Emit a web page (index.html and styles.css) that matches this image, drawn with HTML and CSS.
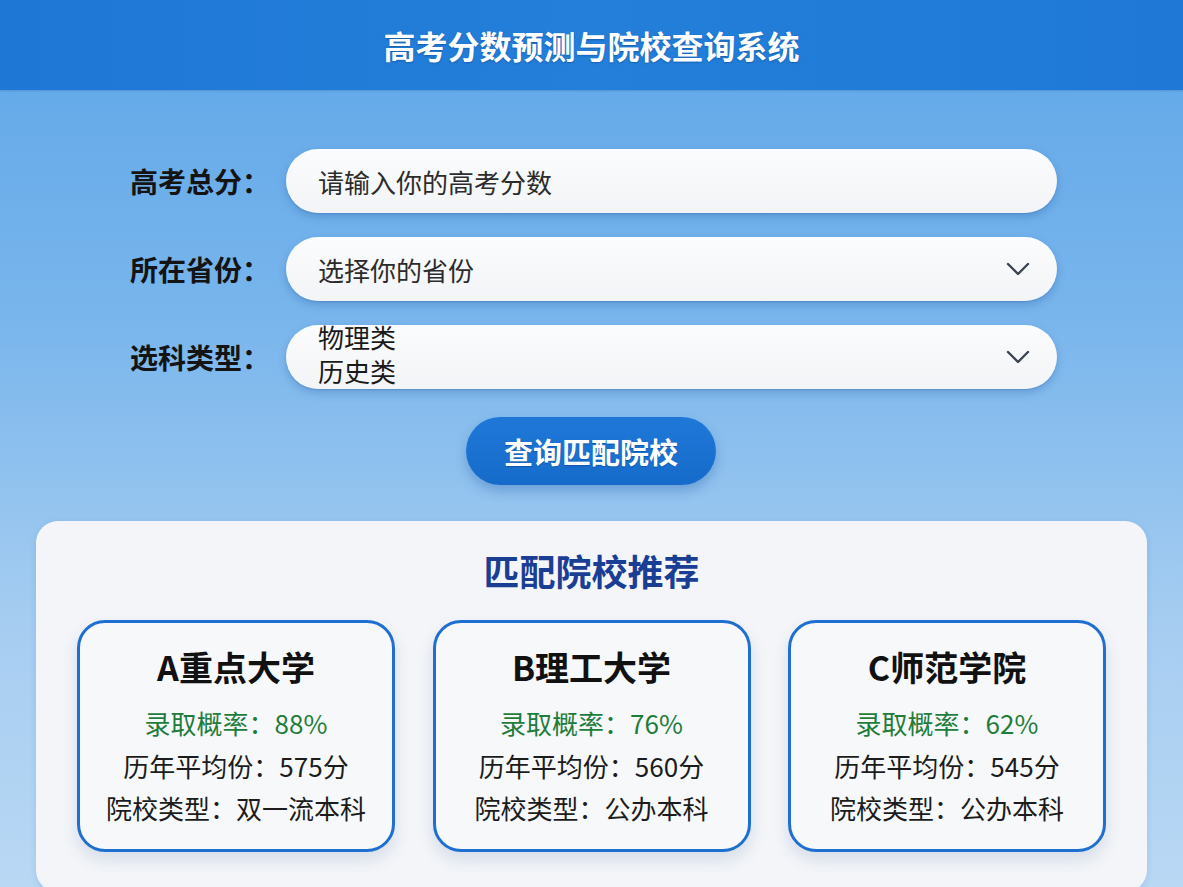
FILE: index.html
```html
<!DOCTYPE html>
<html lang="zh-CN">
<head>
<meta charset="utf-8">
<title>高考分数预测与院校查询系统</title>
<link rel="stylesheet" href="styles.css">
</head>
<body>
<header class="topbar">
  <h1 class="topbar-title">高考分数预测与院校查询系统</h1>
</header>
<main class="page">
  <form class="query-form">
    <div class="form-row">
      <label class="form-label">高考总分：</label>
      <div class="field"><span class="field-text">请输入你的高考分数</span></div>
    </div>
    <div class="form-row">
      <label class="form-label">所在省份：</label>
      <div class="field field-select">
        <span class="field-text">选择你的省份</span>
        <svg class="chevron" viewBox="0 0 24 14" width="24" height="14"><path d="M2 2 L12 12 L22 2" fill="none" stroke="#3a4450" stroke-width="2.4" stroke-linecap="round" stroke-linejoin="round"/></svg>
      </div>
    </div>
    <div class="form-row">
      <label class="form-label">选科类型：</label>
      <div class="field field-select">
        <span class="field-options"><span>物理类</span><span>历史类</span></span>
        <svg class="chevron" viewBox="0 0 24 14" width="24" height="14"><path d="M2 2 L12 12 L22 2" fill="none" stroke="#3a4450" stroke-width="2.4" stroke-linecap="round" stroke-linejoin="round"/></svg>
      </div>
    </div>
    <div class="form-actions">
      <button type="button" class="btn-primary">查询匹配院校</button>
    </div>
  </form>

  <section class="results">
    <h2 class="results-title">匹配院校推荐</h2>
    <div class="card-grid">
      <div class="school-card">
        <div class="school-name">A重点大学</div>
        <div class="school-line rate">录取概率：88%</div>
        <div class="school-line">历年平均份：575分</div>
        <div class="school-line">院校类型：双一流本科</div>
      </div>
      <div class="school-card">
        <div class="school-name">B理工大学</div>
        <div class="school-line rate">录取概率：76%</div>
        <div class="school-line">历年平均份：560分</div>
        <div class="school-line">院校类型：公办本科</div>
      </div>
      <div class="school-card">
        <div class="school-name">C师范学院</div>
        <div class="school-line rate">录取概率：62%</div>
        <div class="school-line">历年平均份：545分</div>
        <div class="school-line">院校类型：公办本科</div>
      </div>
    </div>
  </section>
</main>
</body>
</html>
```

FILE: styles.css
```css
* { box-sizing: border-box; }

html, body {
  margin: 0;
  padding: 0;
}

body {
  font-family: "Noto Sans CJK SC", "Noto Sans", sans-serif;
  background: linear-gradient(180deg, #5ea6e8 0%, #78b5ec 35%, #a6cdf1 70%, #b9d8f4 100%);
  min-height: 100vh;
  overflow: hidden;
}

.topbar {
  height: 90px;
  background: linear-gradient(90deg, #1f77d5 0%, #237fda 50%, #1f78d6 100%);
  display: flex;
  align-items: center;
  justify-content: center;
  box-shadow: 0 1px 2px rgba(20, 80, 160, 0.25);
}

.topbar-title {
  margin: 0;
  color: #ffffff;
  font-size: 32px;
  font-weight: 700;
  letter-spacing: 0;
  text-shadow: 0 1px 2px rgba(0, 40, 100, 0.35);
}

.page {
  padding: 0 36px 0 36px;
}

.query-form {
  width: 927px;
  margin: 59px 0 0 94px;
  display: flex;
  flex-direction: column;
  gap: 24px;
}

.form-row {
  display: grid;
  grid-template-columns: 156px 771px;
  align-items: center;
}

.form-label {
  font-size: 28px;
  font-weight: 700;
  color: #141414;
  white-space: nowrap;
}

.field {
  height: 64px;
  border-radius: 32px;
  background: linear-gradient(180deg, #fbfcfd 0%, #f2f4f7 100%);
  box-shadow: 0 4px 8px rgba(30, 80, 150, 0.28), 0 1px 1px rgba(30, 80, 150, 0.2);
  display: flex;
  align-items: center;
  padding: 0 27px 0 32px;
}

.field-select {
  justify-content: space-between;
}

.field-text {
  font-size: 26px;
  color: #2c2c2c;
}

.field-options {
  display: flex;
  flex-direction: column;
  font-size: 26px;
  line-height: 34px;
  color: #1a1a1a;
  margin-top: -6px;
}

.chevron {
  flex: none;
}

.form-actions {
  display: flex;
  justify-content: center;
  margin-top: 4px;
}

.btn-primary {
  width: 250px;
  height: 68px;
  border: none;
  border-radius: 34px;
  background: linear-gradient(180deg, #1f78d8 0%, #166bca 100%);
  color: #ffffff;
  font-family: "Noto Sans CJK SC", "Noto Sans", sans-serif;
  font-size: 29px;
  font-weight: 700;
  box-shadow: 0 6px 12px rgba(20, 80, 160, 0.3);
  margin-left: -5px;
  text-shadow: 0 1px 1px rgba(0, 30, 90, 0.3);
}

.results {
  margin-top: 36px;
  background: #f3f5f8;
  border-radius: 22px;
  padding: 28px 41px 40px;
  box-shadow: 0 2px 6px rgba(40, 90, 160, 0.15);
}

.results-title {
  margin: 0;
  text-align: center;
  font-size: 36px;
  line-height: 43px;
  font-weight: 700;
  color: #1b3e95;
}

.card-grid {
  margin-top: 28px;
  display: grid;
  grid-template-columns: repeat(3, 318px);
  justify-content: space-between;
}

.school-card {
  height: 232px;
  border: 3px solid #1f6fd0;
  border-radius: 28px;
  background: #f7f8fa;
  box-shadow: 0 8px 16px rgba(40, 80, 140, 0.14);
  padding: 23px 10px 20px;
  text-align: center;
}

.school-name {
  font-size: 34px;
  line-height: 42px;
  font-weight: 700;
  color: #111111;
  margin-bottom: 14px;
}

.school-line {
  font-size: 26px;
  line-height: 42.5px;
  color: #1c1c1c;
}

.school-line.rate {
  color: #1f7d3c;
}
```
